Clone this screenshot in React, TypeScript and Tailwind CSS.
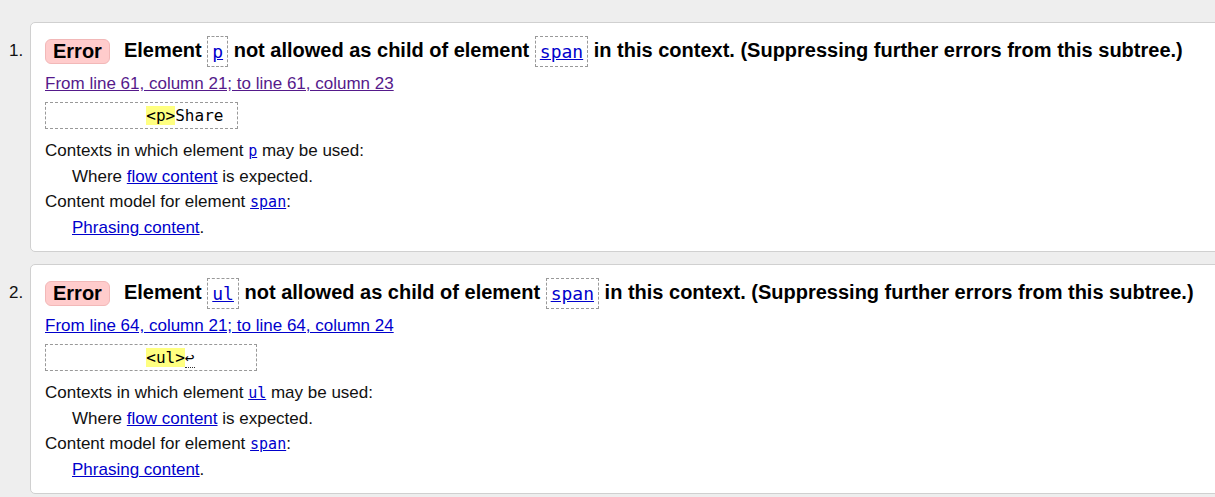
import React from 'react';

type Item = {
  num: number;
  el: string;
  from: string;
  visited: boolean;
  lead: string;
  mark: string;
  rest: React.ReactNode;
};

const items: Item[] = [
  {
    num: 1,
    el: 'p',
    from: 'From line 61, column 21; to line 61, column 23',
    visited: true,
    lead: '          ',
    mark: '<p>',
    rest: 'Share ',
  },
  {
    num: 2,
    el: 'ul',
    from: 'From line 64, column 21; to line 64, column 24',
    visited: false,
    lead: '          ',
    mark: '<ul>',
    rest: (
      <>
        <abbr className="no-underline border-b border-dotted border-[#333]">↩</abbr>
        {'      '}
      </>
    ),
  },
];

function CodeBox({ children }: { children: React.ReactNode }) {
  return (
    <span className="inline-block border border-dashed border-[#999] px-[4px] leading-[29px] align-middle">
      <a className="font-['DejaVu_Sans_Mono',monospace] font-normal text-[18px] text-[#0000cc] underline">
        {children}
      </a>
    </span>
  );
}

function Code({ children }: { children: React.ReactNode }) {
  return (
    <a className="font-['DejaVu_Sans_Mono',monospace] text-[15px] text-[#0000cc] underline">{children}</a>
  );
}

function ErrorCard({ item }: { item: Item }) {
  return (
    <div className="flex items-start">
      <div className="w-[30px] shrink-0 pl-[9px] pt-[13px] leading-[32px] text-[17px] text-[#111]">
        {item.num}.
      </div>
      <div className="w-[1200px] shrink-0 bg-white border border-[#d0d0d0] rounded-[5px] pl-[14px] pt-[12px] pb-[11px]">
        {/* Title */}
        <div className="flex items-center h-[32px] whitespace-nowrap">
          <span className="inline-block bg-[#ffcccc] border border-[#f2b8b8] rounded-[6px] px-[7px] h-[25px] leading-[23px] text-[20px] font-bold text-black">
            Error
          </span>
          <span className="ml-[14px] text-[20px] font-bold text-black">
            Element <CodeBox>{item.el}</CodeBox> not allowed as child of element <CodeBox>span</CodeBox> in this
            context. (Suppressing further errors from this subtree.)
          </span>
        </div>

        {/* Location */}
        <div className="mt-[5px] leading-[24px] text-[17px]">
          <a className={`underline ${item.visited ? 'text-[#551a8b]' : 'text-[#0000cc]'}`}>{item.from}</a>
        </div>

        {/* Extract */}
        <div className="mt-[6px]">
          <code className="inline-block border border-dashed border-[#999] px-[4px] leading-[25px] whitespace-pre font-['DejaVu_Sans_Mono',monospace] text-[16px] text-black">
            {item.lead}
            <b className="font-normal bg-[#ffff80]">{item.mark}</b>
            {item.rest}
          </code>
        </div>

        {/* Details */}
        <div className="mt-[9px] text-[17px] leading-[25px] text-[#111]">
          <div>
            Contexts in which element <Code>{item.el}</Code> may be used:
          </div>
          <div className="pl-[27px]">
            Where <a className="underline text-[#0000cc]">flow content</a> is expected.
          </div>
          <div>
            Content model for element <Code>span</Code>:
          </div>
          <div className="pl-[27px]">
            <a className="underline text-[#0000cc]">Phrasing content</a>.
          </div>
        </div>
      </div>
    </div>
  );
}

export default function App() {
  return (
    <div className="min-h-screen w-[1215px] overflow-hidden bg-[#eeeeee] pt-[22px] font-['Liberation_Sans',Arial,sans-serif]">
      <div className="flex flex-col gap-[12px]">
        {items.map((it) => (
          <ErrorCard key={it.num} item={it} />
        ))}
      </div>
    </div>
  );
}
